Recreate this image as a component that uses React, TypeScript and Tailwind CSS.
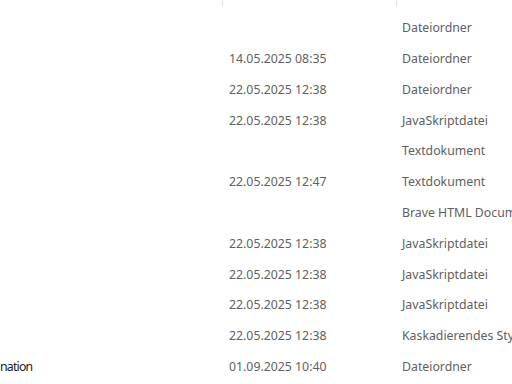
const rows = [
  { name: "", date: "", type: "Dateiordner" },
  { name: "", date: "14.05.2025 08:35", type: "Dateiordner" },
  { name: "", date: "22.05.2025 12:38", type: "Dateiordner" },
  { name: "", date: "22.05.2025 12:38", type: "JavaSkriptdatei" },
  { name: "", date: "", type: "Textdokument" },
  { name: "", date: "22.05.2025 12:47", type: "Textdokument" },
  { name: "", date: "", type: "Brave HTML Document" },
  { name: "", date: "22.05.2025 12:38", type: "JavaSkriptdatei" },
  { name: "", date: "22.05.2025 12:38", type: "JavaSkriptdatei" },
  { name: "", date: "22.05.2025 12:38", type: "JavaSkriptdatei" },
  { name: "", date: "22.05.2025 12:38", type: "Kaskadierendes Stylesheet" },
  { name: "nation", date: "01.09.2025 10:40", type: "Dateiordner" },
];

const App = () => {
  return (
    <div className="w-[512px] h-[384px] overflow-hidden bg-white font-['Noto_Sans',sans-serif] text-[12.3px]">
      {/* header */}
      <div className="flex h-[13px]">
        <div className="w-[222px] shrink-0" />
        <div className="w-[174px] shrink-0 border-l border-[#e5e5e5] h-[7px]" />
        <div className="flex-1 border-l border-[#e5e5e5] h-[7px]" />
      </div>
      {/* rows */}
      {rows.map((r, i) => (
        <div key={i} className="flex items-center h-[30.8px] whitespace-nowrap overflow-hidden">
          <div className="w-[222px] shrink-0 text-[#1b1b1b] tracking-[-0.8px]">{r.name}</div>
          <div className="w-[174px] shrink-0 pl-[7px] text-[#606060]">{r.date}</div>
          <div className="flex-1 pl-[6px] text-[#606060]">{r.type}</div>
        </div>
      ))}
    </div>
  );
};

export default App;
